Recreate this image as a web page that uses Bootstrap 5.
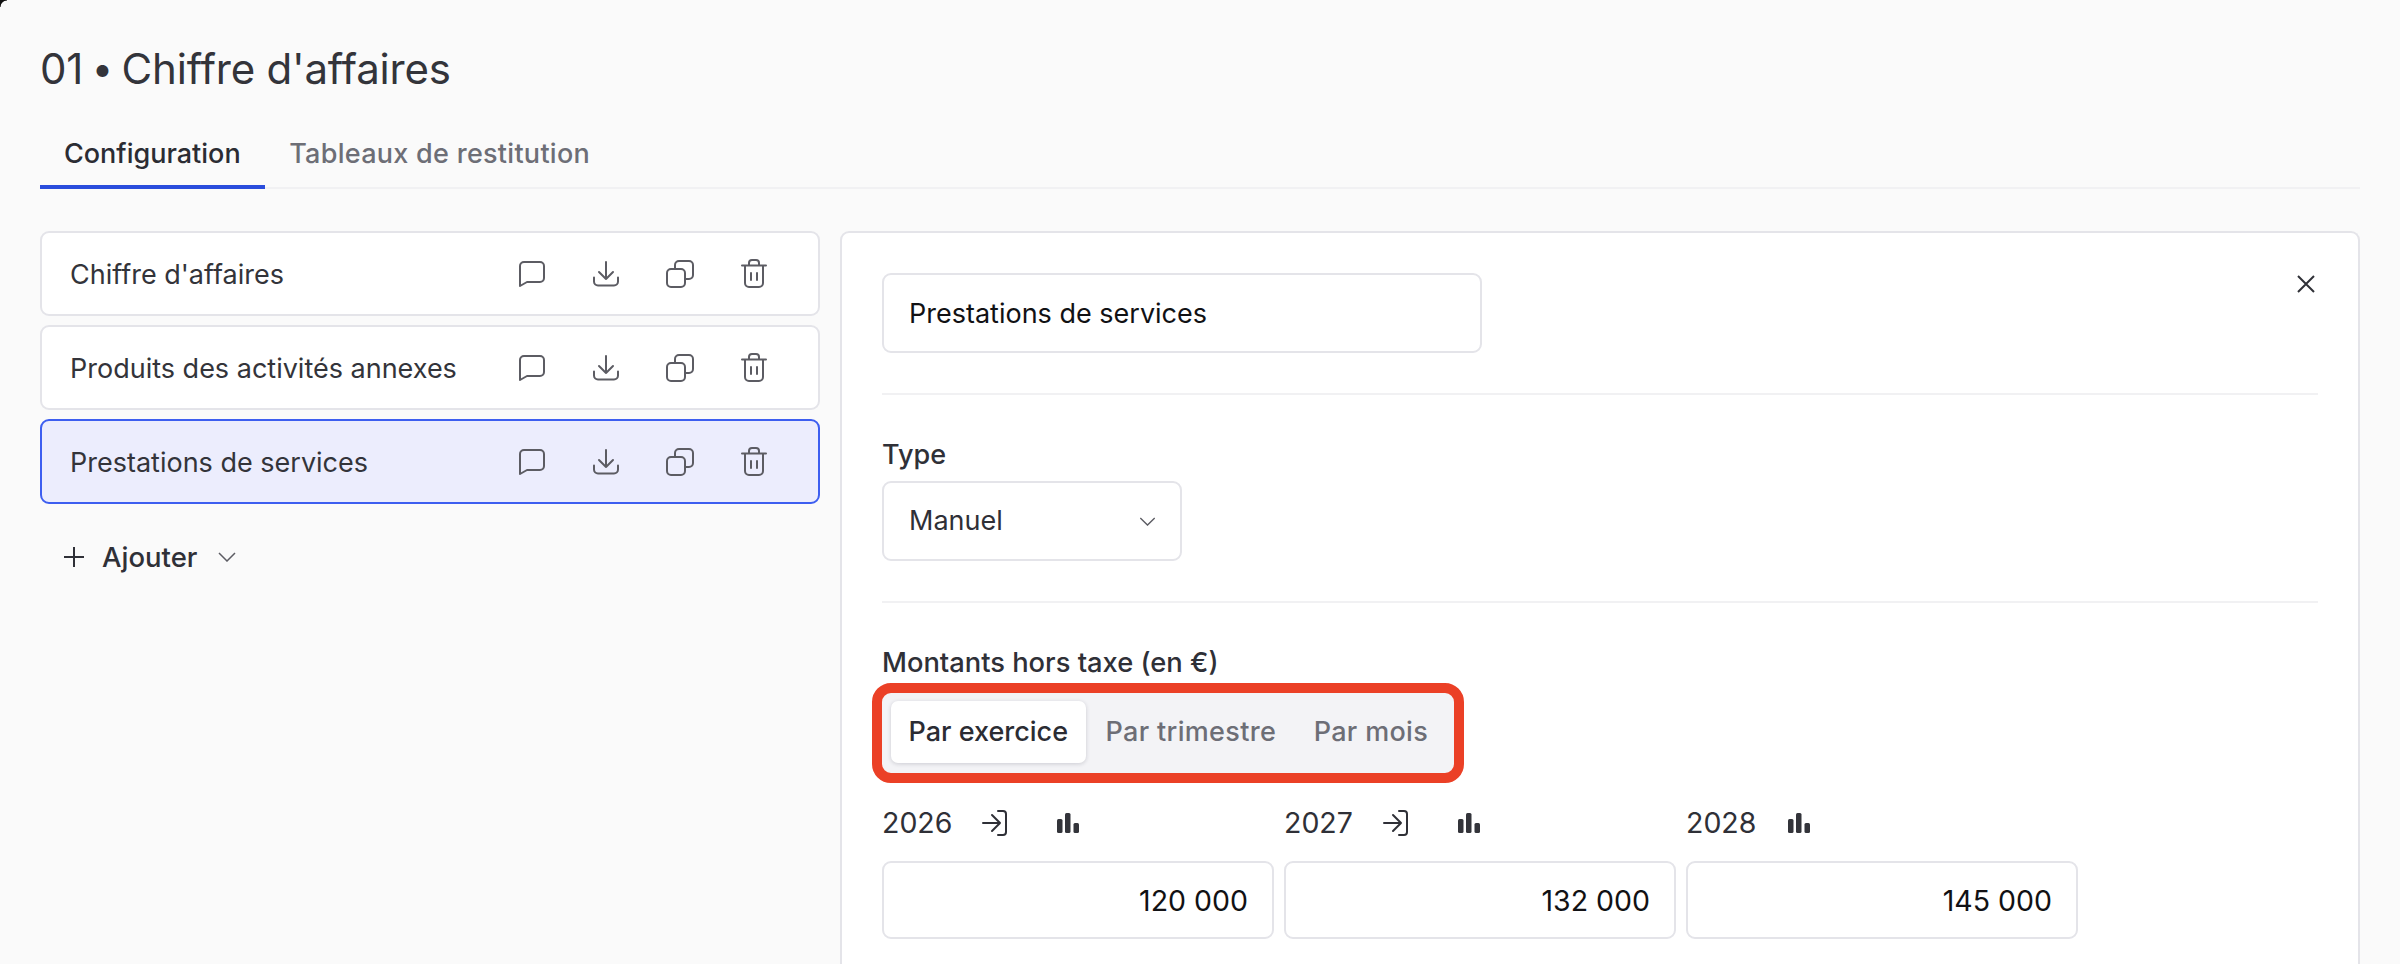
<!DOCTYPE html>
<html lang="fr">
<head>
<meta charset="utf-8">
<title>Chiffre d'affaires</title>
<link href="https://cdn.jsdelivr.net/npm/bootstrap@5.3.0/dist/css/bootstrap.min.css" rel="stylesheet">
<style>
html,body{height:964px;overflow:hidden}
body{background:#fafafa;font-family:Inter,"Liberation Sans",sans-serif;color:#33343a;font-size:27px;position:relative}
body::before{content:"";position:absolute;left:0;top:0;width:7px;height:7px;background:radial-gradient(circle at 100% 100%,transparent 6px,#111 6.800px)}
.page{padding:44px 40px 0}
.page-title{font-size:42px;font-weight:400;line-height:50px;margin:0 0 25px;letter-spacing:-.2px}
.bull{font-size:38px;margin:0 -3px;line-height:0;vertical-align:2px}
.tabs{border-bottom:2px solid #f1f1f3;height:70px}
.tabs .nav-link{padding:15px 24.500px 11px 24px;height:70px;line-height:40px;font-size:27px;font-weight:500;color:#6d6e76;border-bottom:4px solid transparent;border-radius:0;margin-bottom:-2px}
.tabs .nav-link.active{color:#2b2c33;border-bottom-color:#2a4ddc}
.tabs .nav-item+.nav-item .nav-link{letter-spacing:.28px}
.body-row{margin-top:42px;gap:20px}
.side{width:780px;flex:none}
.item{height:85px;background:#fff;border:2px solid #e4e4e9;border-radius:9px;padding:0 27px 0 28px;margin-bottom:9px}
.item.sel{background:#ecedfd;border-color:#3d5ef0}
.item svg{display:block}
.item-name{padding-top:4px}
.slot{width:74px;display:flex;justify-content:center;color:#5c5c63}
.add{padding:0;margin:27px 0 0 23px;border:0;background:none;font-size:27.500px;font-weight:500;color:#2f3037;line-height:34px}
.add-label{margin-left:17px;margin-right:21px}
.panel{flex:1;background:#fff;border:2px solid #e4e4e9;border-bottom:0;border-radius:9px 9px 0 0;padding:40px 40px 0;height:760px}
.field{height:80px;border:2px solid #e4e4e9;border-radius:9px;font-size:27px;color:#111114;padding:0 25px;box-shadow:none}
.name{width:600px}
.close-x{border:0;background:none;padding:0;margin:2px 3px 0 0;line-height:0;color:#2f3037}
.sep{height:2px;background:#f1f1f3;border:0;opacity:1;margin:40px 0 0}
.spacer{height:45px}
.lbl{font-size:27px;font-weight:500;line-height:30px;margin:0;color:#2f3037}
.lbl-type{margin-bottom:11px}
.lbl-amount{font-size:27.300px}
.type{width:300px;background-image:url("data:image/svg+xml,%3csvg xmlns='http://www.w3.org/2000/svg' viewBox='0 0 18 10'%3e%3cpath fill='none' stroke='%235c5c63' stroke-width='1.5' d='M1 1l8 8 8-8'/%3e%3c/svg%3e");background-position:right 24px center;background-size:17px 9px;color:#2f3037}
.seg{background:#f3f3f6;border-radius:9px;padding:8px 7px 10px 9px;outline:10px solid #eb4026;gap:1px;margin-top:15px}
.seg .btn{font-size:27px;font-weight:500;color:#6d6e76;border:0;border-radius:7px;padding:0 18.500px 0 18px;height:62px;line-height:62px;letter-spacing:.33px}
.seg .btn.active{background:#fff;color:#2b2c33;box-shadow:0 1px 4px rgba(30,30,50,.18);padding:0 17.500px;letter-spacing:0;margin-right:1px}
.years{display:grid;grid-template-columns:repeat(3,392px);gap:0 10px;margin-top:35px}
.yhead{height:30px;line-height:30px;font-size:28.500px;color:#2f3037;margin-bottom:23px;gap:30px}
.yhead .bars{margin-left:19px;color:#33343a}
.yhead .last{margin-left:2px}
.amount{text-align:right;padding-right:24px;height:78px;font-size:28.500px}
</style>
</head>
<body>
<main class="page">
  <h1 class="page-title">01 <span class="bull">•</span> Chiffre d'affaires</h1>
  <ul class="nav tabs">
    <li class="nav-item"><a class="nav-link active" href="#">Configuration</a></li>
    <li class="nav-item"><a class="nav-link" href="#">Tableaux de restitution</a></li>
  </ul>

  <div class="d-flex body-row align-items-start">
    <div class="side">
      <div class="item d-flex align-items-center">
        <span class="flex-grow-1 item-name">Chiffre d'affaires</span>
        <span class="slot"><svg width="26" height="26" viewBox="0 0 26 26" fill="none" stroke="currentColor" stroke-width="2" stroke-linejoin="round"><path d="M1 25V5a4 4 0 0 1 4-4h16a4 4 0 0 1 4 4v12a4 4 0 0 1-4 4H8L1 25z"/></svg></span>
        <span class="slot"><svg width="26" height="26" viewBox="0 0 26 26" fill="none" stroke="currentColor" stroke-width="2" stroke-linecap="round" stroke-linejoin="round"><path d="M13 1v17M6 11l7 7 7-7M1 16.500v4a4 4 0 0 0 4 4h16a4 4 0 0 0 4-4v-4"/></svg></span>
        <span class="slot"><svg width="28" height="28" viewBox="0 0 28 28" fill="none" stroke="currentColor" stroke-width="2" stroke-linejoin="round"><rect x="1" y="9" width="18" height="18" rx="4"/><path d="M9 9V5a4 4 0 0 1 4-4h10a4 4 0 0 1 4 4v10a4 4 0 0 1-4 4h-4"/></svg></span>
        <span class="slot"><svg width="26" height="29" viewBox="0 0 26 29" fill="none" stroke="currentColor" stroke-width="2" stroke-linecap="round" stroke-linejoin="round"><path d="M1 6.500h24M8 6.500V4a3 3 0 0 1 3-3h4a3 3 0 0 1 3 3v2.500M4 6.500V24a4 4 0 0 0 4 4h10a4 4 0 0 0 4-4V6.500M10 14v7M16 14v7"/></svg></span>
      </div>
      <div class="item d-flex align-items-center">
        <span class="flex-grow-1 item-name">Produits des activités annexes</span>
        <span class="slot"><svg width="26" height="26" viewBox="0 0 26 26" fill="none" stroke="currentColor" stroke-width="2" stroke-linejoin="round"><path d="M1 25V5a4 4 0 0 1 4-4h16a4 4 0 0 1 4 4v12a4 4 0 0 1-4 4H8L1 25z"/></svg></span>
        <span class="slot"><svg width="26" height="26" viewBox="0 0 26 26" fill="none" stroke="currentColor" stroke-width="2" stroke-linecap="round" stroke-linejoin="round"><path d="M13 1v17M6 11l7 7 7-7M1 16.500v4a4 4 0 0 0 4 4h16a4 4 0 0 0 4-4v-4"/></svg></span>
        <span class="slot"><svg width="28" height="28" viewBox="0 0 28 28" fill="none" stroke="currentColor" stroke-width="2" stroke-linejoin="round"><rect x="1" y="9" width="18" height="18" rx="4"/><path d="M9 9V5a4 4 0 0 1 4-4h10a4 4 0 0 1 4 4v10a4 4 0 0 1-4 4h-4"/></svg></span>
        <span class="slot"><svg width="26" height="29" viewBox="0 0 26 29" fill="none" stroke="currentColor" stroke-width="2" stroke-linecap="round" stroke-linejoin="round"><path d="M1 6.500h24M8 6.500V4a3 3 0 0 1 3-3h4a3 3 0 0 1 3 3v2.500M4 6.500V24a4 4 0 0 0 4 4h10a4 4 0 0 0 4-4V6.500M10 14v7M16 14v7"/></svg></span>
      </div>
      <div class="item sel d-flex align-items-center">
        <span class="flex-grow-1 item-name">Prestations de services</span>
        <span class="slot"><svg width="26" height="26" viewBox="0 0 26 26" fill="none" stroke="currentColor" stroke-width="2" stroke-linejoin="round"><path d="M1 25V5a4 4 0 0 1 4-4h16a4 4 0 0 1 4 4v12a4 4 0 0 1-4 4H8L1 25z"/></svg></span>
        <span class="slot"><svg width="26" height="26" viewBox="0 0 26 26" fill="none" stroke="currentColor" stroke-width="2" stroke-linecap="round" stroke-linejoin="round"><path d="M13 1v17M6 11l7 7 7-7M1 16.500v4a4 4 0 0 0 4 4h16a4 4 0 0 0 4-4v-4"/></svg></span>
        <span class="slot"><svg width="28" height="28" viewBox="0 0 28 28" fill="none" stroke="currentColor" stroke-width="2" stroke-linejoin="round"><rect x="1" y="9" width="18" height="18" rx="4"/><path d="M9 9V5a4 4 0 0 1 4-4h10a4 4 0 0 1 4 4v10a4 4 0 0 1-4 4h-4"/></svg></span>
        <span class="slot"><svg width="26" height="29" viewBox="0 0 26 29" fill="none" stroke="currentColor" stroke-width="2" stroke-linecap="round" stroke-linejoin="round"><path d="M1 6.500h24M8 6.500V4a3 3 0 0 1 3-3h4a3 3 0 0 1 3 3v2.500M4 6.500V24a4 4 0 0 0 4 4h10a4 4 0 0 0 4-4V6.500M10 14v7M16 14v7"/></svg></span>
      </div>
      <button type="button" class="add d-inline-flex align-items-center">
        <svg width="22" height="22" viewBox="0 0 22 22" fill="none" stroke="currentColor" stroke-width="2"><path d="M11 1v20M1 11h20"/></svg>
        <span class="add-label">Ajouter</span>
        <svg width="18" height="10" viewBox="0 0 18 10" fill="none" stroke="#5c5c63" stroke-width="1.500"><path d="M1 1l8 8 8-8"/></svg>
      </button>
    </div>

    <section class="panel">
      <div class="d-flex justify-content-between align-items-start">
        <input class="form-control field name" type="text" value="Prestations de services" aria-label="Nom">
        <button type="button" class="close-x" aria-label="Fermer"><svg width="18" height="18" viewBox="0 0 18 18" fill="none" stroke="currentColor" stroke-width="2"><path d="M1 1l16 16M17 1L1 17"/></svg></button>
      </div>
      <hr class="sep">
      <div class="spacer"></div>
      <label class="lbl lbl-type d-block">Type</label>
      <select class="form-select field type" aria-label="Type"><option>Manuel</option></select>
      <hr class="sep">
      <div class="spacer"></div>
      <p class="lbl lbl-amount">Montants hors taxe (en €)</p>
      <div class="seg d-inline-flex" role="group">
        <button type="button" class="btn active">Par exercice</button>
        <button type="button" class="btn">Par trimestre</button>
        <button type="button" class="btn">Par mois</button>
      </div>
      <div class="years">
        <div>
          <div class="yhead d-flex align-items-center"><span>2026</span>
            <svg width="26" height="26" viewBox="0 0 26 26" fill="none" stroke="currentColor" stroke-width="2" stroke-linecap="round" stroke-linejoin="round"><path d="M1 13h17M10 5l8 8-8 8M16 1h5a3 3 0 0 1 3 3v18a3 3 0 0 1-3 3h-5"/></svg>
            <svg class="bars" width="22" height="20" viewBox="0 0 22 20" fill="currentColor"><rect x="0" y="6" width="5.500" height="14" rx="1.500"/><rect x="8" y="0" width="5.500" height="20" rx="1.500"/><rect x="16.500" y="10" width="5.500" height="10" rx="1.500"/></svg>
          </div>
          <input class="form-control field amount" type="text" value="120 000" aria-label="2026">
        </div>
        <div>
          <div class="yhead d-flex align-items-center"><span>2027</span>
            <svg width="26" height="26" viewBox="0 0 26 26" fill="none" stroke="currentColor" stroke-width="2" stroke-linecap="round" stroke-linejoin="round"><path d="M1 13h17M10 5l8 8-8 8M16 1h5a3 3 0 0 1 3 3v18a3 3 0 0 1-3 3h-5"/></svg>
            <svg class="bars" width="22" height="20" viewBox="0 0 22 20" fill="currentColor"><rect x="0" y="6" width="5.500" height="14" rx="1.500"/><rect x="8" y="0" width="5.500" height="20" rx="1.500"/><rect x="16.500" y="10" width="5.500" height="10" rx="1.500"/></svg>
          </div>
          <input class="form-control field amount" type="text" value="132 000" aria-label="2027">
        </div>
        <div>
          <div class="yhead d-flex align-items-center"><span>2028</span>
            <svg class="bars last" width="22" height="20" viewBox="0 0 22 20" fill="currentColor"><rect x="0" y="6" width="5.500" height="14" rx="1.500"/><rect x="8" y="0" width="5.500" height="20" rx="1.500"/><rect x="16.500" y="10" width="5.500" height="10" rx="1.500"/></svg>
          </div>
          <input class="form-control field amount" type="text" value="145 000" aria-label="2028">
        </div>
      </div>
    </section>
  </div>
</main>
<script src="https://cdn.jsdelivr.net/npm/bootstrap@5.3.0/dist/js/bootstrap.bundle.min.js"></script>
</body>
</html>
